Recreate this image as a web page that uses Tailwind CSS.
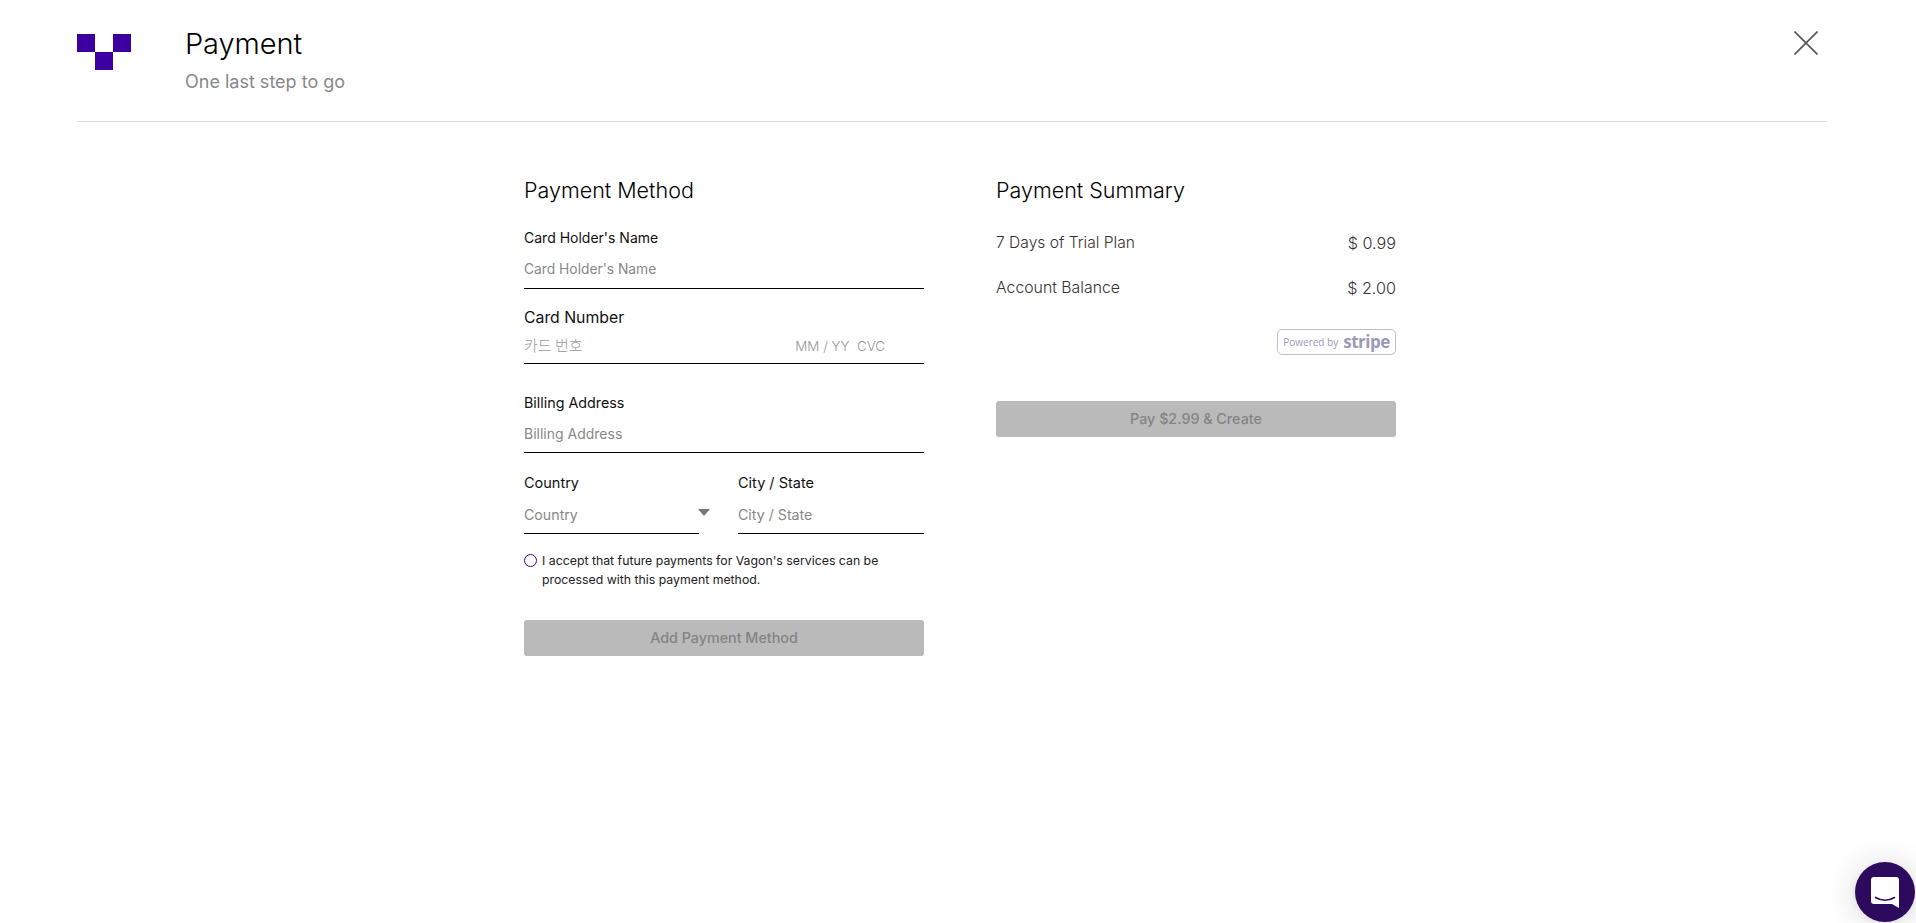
<!DOCTYPE html>
<html lang="en">
<head>
<meta charset="utf-8">
<title>Payment</title>
<script src="https://cdn.jsdelivr.net/npm/@tailwindcss/browser@4"></script>
</head>
<body class="bg-white">
<div class="relative h-[923px] w-[1916px] overflow-hidden bg-white text-black font-['Inter','Noto_Sans_CJK_KR',sans-serif]">
  <div class="ml-[77px] mr-[89px] h-[122px] border-b border-[#dddddd] flex items-start relative">
    <svg class="mt-[34px] w-[54px] h-[36px]" viewBox="0 0 54 36"><path fill="#3d00a0" d="M0 0h18v18H0zM36 0h18v18H36zM18 18h18v18H18z"/></svg>
    <div class="ml-[54px] mt-[24px]">
      <div class="text-[29px] leading-[40px] font-light tracking-[-0.1px]">Payment</div>
      <div class="text-[18px] leading-[24px] mt-[6px] text-[#888888]">One last step to go</div>
    </div>
    <svg class="absolute left-[1717px] top-[31px] w-[24px] h-[24px]" viewBox="0 0 24 24" fill="none" stroke="#555555" stroke-width="1.6"><path d="M0.5 0.5L23.5 23.5M23.5 0.5L0.5 23.5"/></svg>
  </div>
  <div class="flex ml-[524px] gap-[72px] mt-[53px]">
    <div class="w-[400px]">
      <h2 class="text-[21.5px] leading-[30px] font-light">Payment Method</h2>
      <div class="mt-[23px] text-[14px] leading-[20px] text-[#111111]">Card Holder's Name</div>
      <div class="h-[41px] border-b-[1.5px] border-black text-[13.8px] leading-[20px] pt-[11px] text-[#888888]">Card Holder's Name</div>
      <div class="mt-[19px] text-[15.8px] leading-[20px] text-[#111111]">Card Number</div>
      <div class="h-[36px] border-b-[1.5px] border-black flex pt-[7px] text-[#999999]">
        <span class="text-[15px] leading-[20px] font-['Noto_Sans_CJK_KR',sans-serif] font-light">카드 번호</span>
        <span class="ml-auto mr-[39px] text-[13.4px] leading-[22px] font-light whitespace-pre">MM / YY  CVC</span>
      </div>
      <div class="mt-[29px] text-[14.3px] leading-[20px] text-[#111111]">Billing Address</div>
      <div class="h-[40px] border-b-[1.5px] border-black text-[14px] leading-[20px] pt-[11px] text-[#888888]">Billing Address</div>
      <div class="flex mt-[20px]">
        <div class="w-[175px] relative">
          <div class="text-[14.5px] leading-[20px] text-[#111111]">Country</div>
          <div class="h-[41px] border-b-[1.5px] border-black text-[14.2px] leading-[20px] pt-[12px] text-[#888888]">Country</div>
          <div class="absolute left-[174px] top-[36px] w-0 h-0 border-x-[6.5px] border-x-transparent border-t-[7px] border-t-[#777777]"></div>
        </div>
        <div class="w-[186px] ml-[39px]">
          <div class="text-[14.5px] leading-[20px] text-[#111111]">City / State</div>
          <div class="h-[41px] border-b-[1.5px] border-black text-[14.2px] leading-[20px] pt-[12px] text-[#888888]">City / State</div>
        </div>
      </div>
      <div class="flex mt-[17px]">
        <span class="mt-[3px] shrink-0 w-[13px] h-[13px] rounded-full border-[1.5px] border-[#3d00a0]"></span>
        <span class="ml-[5px] text-[12.3px] leading-[19px] text-[#222222]">I accept that future payments for Vagon's services can be processed with this payment method.</span>
      </div>
      <div class="mt-[31px] h-[36px] rounded-[3px] bg-[#bababa] text-[#848484] text-[14.3px] font-medium flex items-center justify-center">Add Payment Method</div>
    </div>
    <div class="w-[400px]">
      <h2 class="text-[21.5px] leading-[30px] font-light">Payment Summary</h2>
      <div class="mt-[27px] flex justify-between text-[15.6px] leading-[22px] font-light text-[#333333]"><span>7 Days of Trial Plan</span><span class="text-[16.2px]">$ 0.99</span></div>
      <div class="mt-[23px] flex justify-between text-[15.8px] leading-[22px] font-light text-[#333333]"><span>Account Balance</span><span class="text-[16.2px]">$ 2.00</span></div>
      <div class="mt-[30px] flex justify-end">
        <div class="w-[119px] h-[26px] rounded-[5px] border border-[#bdbdd2] flex items-center justify-center gap-[5px] text-[#9a9ab8] font-['Open_Sans',sans-serif]">
          <span class="text-[10px]">Powered by</span><span class="text-[17px] leading-[20px] font-bold tracking-[-0.5px]">stripe</span>
        </div>
      </div>
      <div class="mt-[46px] h-[36px] rounded-[3px] bg-[#bababa] text-[#848484] text-[14.3px] font-medium flex items-center justify-center">Pay $2.99 &amp; Create</div>
    </div>
  </div>
  <div class="absolute left-[1855px] top-[862px] w-[60px] h-[60px] rounded-full bg-[#2d0a5e] shadow-[0_1px_6px_rgba(0,0,0,0.06),0_2px_32px_rgba(0,0,0,0.16)] flex items-center justify-center">
    <svg class="w-[28px] h-[32px] mt-[2px]" viewBox="0 0 28 32"><path fill="#ffffff" d="M3 0h22a3 3 0 0 1 3 3v28l-7-4H3a3 3 0 0 1-3-3V3a3 3 0 0 1 3-3z"/><path fill="none" stroke="#2d0a5e" stroke-width="1.6" stroke-linecap="round" d="M4.5 20.5c6 3.5 13 3.5 19 0"/></svg>
  </div>
</div>
</body>
</html>
